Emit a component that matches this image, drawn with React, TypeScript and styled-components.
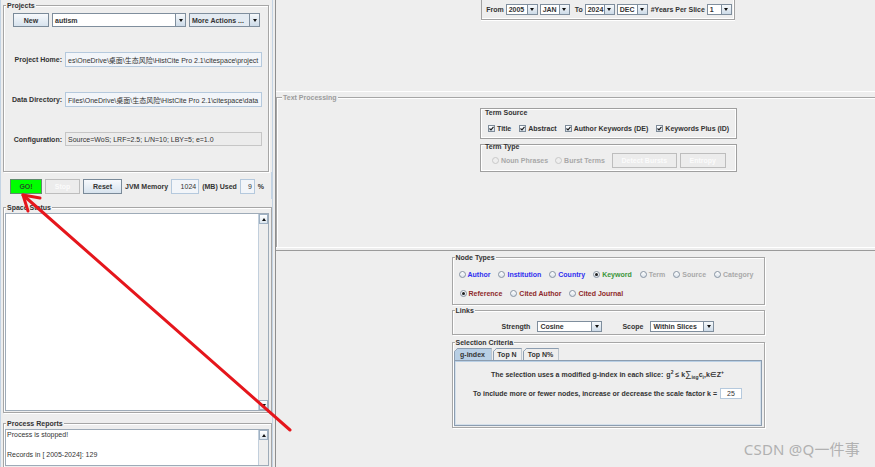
import React from "react";
import styled, { createGlobalStyle, css } from "styled-components";

const GlobalStyle = createGlobalStyle`
  html, body { margin: 0; padding: 0; background: #eeeeee; }
  body {
    font-family: "Liberation Sans", "Noto Sans CJK SC", Arial, sans-serif;
    font-size: 7px;
    font-weight: bold;
    color: #333333;
  }
  *, *::before, *::after { box-sizing: border-box; }
`;

const Root = styled.div`
  position: relative;
  display: flex;
  width: 875px;
  height: 467px;
  overflow: hidden;
  background: #eeeeee;
`;

/* ---------- shared pieces ---------- */

const Group = styled.div`
  display: flex;
  flex-direction: column;
  border: 1px solid #a6a6a6;
  box-shadow: inset 1px 1px 0 #ffffff, 1px 1px 0 #ffffff;
`;

const GroupTitle = styled.div<{ $muted?: boolean; $ml?: number }>`
  align-self: flex-start;
  height: 9px;
  margin: -5px 0 0 ${(p) => p.$ml ?? 2}px;
  padding: 0 1px;
  line-height: 9px;
  background: #eeeeee;
  color: ${(p) => (p.$muted ? "#9c9c9c" : "#333333")};
  white-space: nowrap;
`;

const Button = styled.div<{ $w: number; $h?: number; $variant?: "go" | "off" }>`
  flex-shrink: 0;
  width: ${(p) => p.$w}px;
  height: ${(p) => p.$h ?? 15}px;
  display: flex;
  align-items: center;
  justify-content: center;
  border: 1px solid #7a8a99;
  background: linear-gradient(#f7f9fc, #d7e3ee);
  color: #333333;
  white-space: nowrap;
  ${(p) =>
    p.$variant === "go" &&
    css`
      background: #00ff00;
      border-color: #5d8a6a;
      color: #225522;
    `}
  ${(p) =>
    p.$variant === "off" &&
    css`
      background: #ececec;
      border-color: #bdbdbd;
      color: #fbfbfb;
    `}
`;

const Combo = styled.div<{ $w: number; $h?: number }>`
  flex-shrink: 0;
  display: flex;
  width: ${(p) => p.$w}px;
  height: ${(p) => p.$h ?? 11}px;
  border: 1px solid #7f8e9d;
  background: #ffffff;
`;

const ComboValue = styled.div<{ $tint?: boolean }>`
  flex: 1;
  min-width: 0;
  display: flex;
  align-items: center;
  padding-left: 2px;
  overflow: hidden;
  white-space: nowrap;
  background: ${(p) => (p.$tint ? "#e4ebf2" : "#ffffff")};
`;

const ComboArrow = styled.div`
  width: 10px;
  flex-shrink: 0;
  display: flex;
  align-items: center;
  justify-content: center;
  border-left: 1px solid #7f8e9d;
  background: linear-gradient(#f6f9fb, #cddbe8);
  &::after {
    content: "";
    border-left: 2.5px solid transparent;
    border-right: 2.5px solid transparent;
    border-top: 3px solid #111111;
  }
`;

const Field = styled.div<{ $w?: number; $align?: "left" | "right" | "center"; $tone?: "blue" | "grey" | "white"; $h?: number }>`
  ${(p) => (p.$w ? `width: ${p.$w}px; flex-shrink: 0;` : "")}
  height: ${(p) => p.$h ?? 15}px;
  display: flex;
  align-items: center;
  justify-content: ${(p) => (p.$align === "right" ? "flex-end" : p.$align === "center" ? "center" : "flex-start")};
  padding: 0 2px;
  overflow: hidden;
  white-space: nowrap;
  font-weight: normal;
  border: 1px solid ${(p) => (p.$tone === "grey" ? "#c6c6c6" : "#b5c9dd")};
  background: ${(p) => (p.$tone === "grey" ? "#ececec" : p.$tone === "white" ? "#ffffff" : "#f2f5f9")};
`;

const Text = styled.span<{ $ml?: number }>`
  flex-shrink: 0;
  white-space: nowrap;
  ${(p) => (p.$ml ? `margin-left: ${p.$ml}px;` : "")}
`;

/* ---------- left column ---------- */

const LeftColumn = styled.div`
  width: 272px;
  flex-shrink: 0;
  display: flex;
  flex-direction: column;
  border-left: 1px solid #c3d3e3;
`;

const ProjectsGroup = styled(Group)`
  width: 266px;
  height: 167px;
  margin: 5px 0 0 2px;
`;

const ProjectsBody = styled.div`
  display: flex;
  flex-direction: column;
  gap: 25px;
  padding: 3px 6px 0 8px;
`;

const ToolRow = styled.div`
  display: flex;
  gap: 3px;
  padding-left: 1px;
`;

const FormRow = styled.div`
  display: grid;
  grid-template-columns: 50px 1fr;
  column-gap: 3px;
  align-items: center;
`;

const FormLabel = styled.span`
  text-align: right;
  white-space: nowrap;
`;

const ControlRow = styled.div`
  height: 27px;
  display: flex;
  align-items: center;
  gap: 3px;
  padding: 2px 0 0 9px;
  border-right: 1px solid #c3d3e3;
`;

const LogGroup = styled(Group)<{ $h?: number; $mt: number }>`
  width: 269px;
  margin: ${(p) => p.$mt}px 0 0 2px;
  ${(p) => (p.$h ? `height: ${p.$h}px;` : "flex: 1; border-bottom: none;")}
`;

const LogArea = styled.div`
  flex: 1;
  display: flex;
  margin: 1px 2px 1px 1px;
  border: 1px solid #9eabb8;
  background: #ffffff;
  min-height: 0;
`;

const LogText = styled.div`
  flex: 1;
  padding: 0 1px;
  font-weight: normal;
  line-height: 10px;
  white-space: pre;
`;

const ScrollTrack = styled.div`
  width: 10px;
  flex-shrink: 0;
  display: flex;
  flex-direction: column;
  justify-content: space-between;
  border-left: 1px solid #c2cfdc;
  background: #eeeeee;
`;

const ScrollButton = styled.div<{ $down?: boolean }>`
  height: 10px;
  display: flex;
  align-items: center;
  justify-content: center;
  border: 1px solid #9fb1c3;
  background: linear-gradient(#ffffff, #dce6ef);
  &::after {
    content: "";
    border-left: 2.5px solid transparent;
    border-right: 2.5px solid transparent;
    ${(p) => (p.$down ? "border-top: 3px solid #111;" : "border-bottom: 3px solid #111;")}
  }
`;

const SplitBar = styled.div`
  width: 4px;
  flex-shrink: 0;
  border-left: 1px solid #c3d3e3;
  border-right: 1px solid #8e8e8e;
`;

/* ---------- right column ---------- */

const RightColumn = styled.div`
  width: 664px;
  flex-shrink: 0;
  display: flex;
  flex-direction: column;
`;

const TopPanel = styled.div`
  height: 92px;
  display: flex;
  justify-content: center;
  border-bottom: 1px solid #ffffff;
`;

const DateBox = styled.div`
  height: 20px;
  display: flex;
  align-items: center;
  gap: 2px;
  padding: 0 2px 0 4px;
  border: 1px solid #a2a2a2;
  border-top: none;
  box-shadow: 0 1px 0 #ffffff, inset -1px -1px 0 #ffffff;
`;

const TextGroup = styled(Group)`
  height: 150px;
  margin-top: 5px;
  align-items: center;
  border-right: none;
  border-bottom: none;
  box-shadow: inset 1px 1px 0 #ffffff;
`;

const Bevel = styled.div<{ $mt: number }>`
  width: 257px;
  display: flex;
  flex-direction: column;
  margin-top: ${(p) => p.$mt}px;
  padding: 0 0 3px 4px;
  border: 1px solid #9f9f9f;
  box-shadow: inset 1px 1px 0 #ffffff, inset -1px -1px 0 #ffffff;
`;

const BevelTitle = styled.div<{ $mt?: number }>`
  height: 7px;
  line-height: 7px;
  margin-top: ${(p) => p.$mt ?? 0}px;
  white-space: nowrap;
`;

const OptionRow = styled.div<{ $mt: number; $h?: number; $gap?: number; $pl?: number; $center?: boolean }>`
  display: flex;
  align-items: center;
  height: ${(p) => p.$h ?? 12}px;
  margin-top: ${(p) => p.$mt}px;
  gap: ${(p) => p.$gap ?? 8}px;
  padding-left: ${(p) => p.$pl ?? 0}px;
  ${(p) => (p.$center ? "justify-content: center;" : "")}
`;

const CheckItem = styled.span`
  display: flex;
  align-items: center;
  gap: 2px;
  white-space: nowrap;
`;

const CheckBox = styled.span`
  width: 7px;
  height: 7px;
  display: flex;
  align-items: center;
  justify-content: center;
  border: 1px solid #7d8b99;
  background: linear-gradient(#ffffff, #d6e0ea);
`;

const RadioItem = styled.span<{ $color?: string }>`
  display: flex;
  align-items: center;
  gap: 2px;
  white-space: nowrap;
  color: ${(p) => p.$color ?? "#333333"};
`;

const RadioDot = styled.span<{ $on?: boolean; $off?: boolean }>`
  position: relative;
  width: 7px;
  height: 7px;
  flex-shrink: 0;
  border-radius: 50%;
  border: 1px solid ${(p) => (p.$off ? "#c8c8c8" : "#8794a2")};
  background: ${(p) => (p.$off ? "#eeeeee" : "linear-gradient(#ffffff, #dbe3eb)")};
  ${(p) =>
    p.$on &&
    css`
      &::after {
        content: "";
        position: absolute;
        left: 1px;
        top: 1px;
        width: 3px;
        height: 3px;
        border-radius: 50%;
        background: #1e1e1e;
      }
    `}
`;

const SplitH = styled.div`
  height: 4px;
  border-top: 1px solid #ffffff;
  border-bottom: 1px solid #9a9a9a;
`;

const BottomPanel = styled.div`
  flex: 1;
  display: flex;
  flex-direction: column;
  align-items: center;
`;

const CriteriaGroup = styled(Group)<{ $mt: number }>`
  width: 313px;
  margin-top: ${(p) => p.$mt}px;
`;

const GroupBody = styled.div<{ $pad: string; $gap?: number }>`
  display: flex;
  flex-direction: column;
  padding: ${(p) => p.$pad};
  gap: ${(p) => p.$gap ?? 0}px;
`;

const TabStrip = styled.div`
  display: flex;
  gap: 1px;
  height: 12px;
  margin-top: 1px;
`;

const Tab = styled.div<{ $w: number; $active?: boolean }>`
  width: ${(p) => p.$w}px;
  display: flex;
  align-items: center;
  justify-content: center;
  border: 1px solid #8c9db0;
  border-bottom: none;
  background-origin: border-box;
  background: linear-gradient(
    135deg,
    transparent 2.4px,
    #8c9db0 2.4px,
    #8c9db0 3.4px,
    ${(p) => (p.$active ? "#b8cfe5" : "#eeeeee")} 3.4px
  ) border-box;
  clip-path: polygon(4px 0, 100% 0, 100% 100%, 0 100%, 0 4px);
  white-space: nowrap;
`;

const TabPanel = styled.div`
  height: 66px;
  display: flex;
  flex-direction: column;
  align-items: center;
  gap: 7px;
  padding-top: 7px;
  border: 1px solid #8c9db0;
  box-shadow: inset 0 1px 0 #b8cfe5, inset 0 0 0 1px #d3dfea;
`;

const TabLine = styled.div`
  height: 12px;
  display: flex;
  align-items: center;
  gap: 3px;
  white-space: nowrap;
`;

const Sup = styled.sup`
  font-size: 5px;
  vertical-align: 3px;
`;

const Sub = styled.sub`
  font-size: 5px;
  vertical-align: -2px;
`;

const Sigma = styled.span`
  font-size: 9px;
  font-weight: normal;
`;

const ArrowLayer = styled.svg`
  position: absolute;
  left: 0;
  top: 0;
  pointer-events: none;
`;

const Watermark = styled.div`
  position: absolute;
  right: 15px;
  bottom: 8px;
  font-family: "Noto Sans", "Noto Sans CJK SC", sans-serif;
  font-size: 15px;
  font-weight: normal;
  color: #b1b1b1;
  letter-spacing: 0.2px;
`;

const Check = () => (
  <svg width="5" height="5" viewBox="0 0 5 5">
    <path d="M0.5 2.5 L2 3.9 L4.5 0.8" stroke="#1e1e1e" strokeWidth="1.1" fill="none" />
  </svg>
);

const DropCombo = ({ w, h, tint, children }: { w: number; h?: number; tint?: boolean; children: React.ReactNode }) => (
  <Combo $w={w} $h={h}>
    <ComboValue $tint={tint}>{children}</ComboValue>
    <ComboArrow />
  </Combo>
);

const nodeRow1: [string, string, boolean][] = [
  ["Author", "#3030f0", false],
  ["Institution", "#3030f0", false],
  ["Country", "#3030f0", false],
  ["Keyword", "#3a963a", true],
  ["Term", "#a9a9a9", false],
  ["Source", "#a9a9a9", false],
  ["Category", "#a9a9a9", false],
];

const nodeRow2: [string, boolean][] = [
  ["Reference", true],
  ["Cited Author", false],
  ["Cited Journal", false],
];

export default function App() {
  return (
    <>
      <GlobalStyle />
      <Root>
        <LeftColumn>
          <ProjectsGroup>
            <GroupTitle>Projects</GroupTitle>
            <ProjectsBody>
              <ToolRow>
                <Button $w={36} $h={14}>New</Button>
                <DropCombo w={134} h={14}>autism</DropCombo>
                <DropCombo w={71} h={14} tint>More Actions ...</DropCombo>
              </ToolRow>
              <FormRow>
                <FormLabel>Project Home:</FormLabel>
                <Field>es\OneDrive\桌面\生态风险\HistCite Pro 2.1\citespace\project</Field>
              </FormRow>
              <FormRow>
                <FormLabel>Data Directory:</FormLabel>
                <Field>Files\OneDrive\桌面\生态风险\HistCite Pro 2.1\citespace\data</Field>
              </FormRow>
              <FormRow>
                <FormLabel>Configuration:</FormLabel>
                <Field $tone="grey" $h={14}>Source=WoS; LRF=2.5; L/N=10; LBY=5; e=1.0</Field>
              </FormRow>
            </ProjectsBody>
          </ProjectsGroup>

          <ControlRow>
            <Button $w={32} $variant="go">GO!</Button>
            <Button $w={35} $variant="off">Stop</Button>
            <Button $w={39}>Reset</Button>
            <Text>JVM Memory</Text>
            <Field $w={28} $align="right">1024</Field>
            <Text>(MB) Used</Text>
            <Field $w={15} $align="right">9</Field>
            <Text>%</Text>
          </ControlRow>

          <LogGroup $h={206} $mt={8}>
            <GroupTitle>Space Status</GroupTitle>
            <LogArea>
              <LogText />
              <ScrollTrack>
                <ScrollButton />
                <ScrollButton $down />
              </ScrollTrack>
            </LogArea>
          </LogGroup>

          <LogGroup $mt={10}>
            <GroupTitle>Process Reports</GroupTitle>
            <LogArea>
              <LogText>{"Process is stopped!\n\nRecords in [ 2005-2024]: 129"}</LogText>
              <ScrollTrack>
                <ScrollButton />
              </ScrollTrack>
            </LogArea>
          </LogGroup>
        </LeftColumn>

        <SplitBar />

        <RightColumn>
          <TopPanel>
            <DateBox>
              <Text>From</Text>
              <DropCombo w={32}>2005</DropCombo>
              <DropCombo w={30}>JAN</DropCombo>
              <Text $ml={3}>To</Text>
              <DropCombo w={30}>2024</DropCombo>
              <DropCombo w={31}>DEC</DropCombo>
              <Text $ml={1}>#Years Per Slice</Text>
              <DropCombo w={25}>1</DropCombo>
            </DateBox>
          </TopPanel>

          <TextGroup>
            <GroupTitle $muted $ml={5}>Text Processing</GroupTitle>
            <Bevel $mt={6}>
              <BevelTitle>Term Source</BevelTitle>
              <OptionRow $mt={5} $h={14} $pl={3}>
                {["Title", "Abstract", "Author Keywords (DE)", "Keywords Plus (ID)"].map((t) => (
                  <CheckItem key={t}>
                    <CheckBox>
                      <Check />
                    </CheckBox>
                    {t}
                  </CheckItem>
                ))}
              </OptionRow>
            </Bevel>
            <Bevel $mt={5}>
              <BevelTitle $mt={-2}>Term Type</BevelTitle>
              <OptionRow $mt={3} $h={15} $pl={7} $gap={7}>
                <RadioItem $color="#a8a8a8">
                  <RadioDot $off />
                  Noun Phrases
                </RadioItem>
                <RadioItem $color="#a8a8a8">
                  <RadioDot $off />
                  Burst Terms
                </RadioItem>
                <Button $w={65} $variant="off">Detect Bursts</Button>
                <Button $w={46} $variant="off" style={{ marginLeft: -4 }}>Entropy</Button>
              </OptionRow>
            </Bevel>
          </TextGroup>

          <SplitH />

          <BottomPanel>
            <CriteriaGroup $mt={6}>
              <GroupTitle>Node Types</GroupTitle>
              <GroupBody $pad="6px 0 5px 6px" $gap={7}>
                <OptionRow $mt={0}>
                  {nodeRow1.map(([label, color, on]) => (
                    <RadioItem key={label} $color={color}>
                      <RadioDot $on={on} />
                      {label}
                    </RadioItem>
                  ))}
                </OptionRow>
                <OptionRow $mt={0} $pl={1}>
                  {nodeRow2.map(([label, on]) => (
                    <RadioItem key={label} $color="#8e2a2a">
                      <RadioDot $on={on} />
                      {label}
                    </RadioItem>
                  ))}
                </OptionRow>
              </GroupBody>
            </CriteriaGroup>

            <CriteriaGroup $mt={5}>
              <GroupTitle>Links</GroupTitle>
              <GroupBody $pad="5px 0 2px 0">
                <OptionRow $mt={0} $center $gap={7}>
                  <Text>Strength</Text>
                  <DropCombo w={65}>Cosine</DropCombo>
                  <Text $ml={13}>Scope</Text>
                  <DropCombo w={64}>Within Slices</DropCombo>
                </OptionRow>
              </GroupBody>
            </CriteriaGroup>

            <CriteriaGroup $mt={7}>
              <GroupTitle>Selection Criteria</GroupTitle>
              <GroupBody $pad="0 2px 1px 1px">
                <TabStrip>
                  <Tab $w={38} $active>g-index</Tab>
                  <Tab $w={29}>Top N</Tab>
                  <Tab $w={36}>Top N%</Tab>
                </TabStrip>
                <TabPanel>
                  <TabLine>
                    The selection uses a modified g-index in each slice:
                    <span>
                      g<Sup>2</Sup> ≤ k<Sigma>∑</Sigma>
                      <Sub>i≤g</Sub>c<Sub>i</Sub>,k∈Z<Sup>+</Sup>
                    </span>
                  </TabLine>
                  <TabLine>
                    To include more or fewer nodes, increase or decrease the scale factor k =
                    <Field $w={22} $h={11} $tone="white" $align="center">25</Field>
                  </TabLine>
                </TabPanel>
              </GroupBody>
            </CriteriaGroup>
          </BottomPanel>
        </RightColumn>

        <ArrowLayer width="875" height="467" viewBox="0 0 875 467">
          <g stroke="#e5161c" strokeWidth="3" strokeLinecap="round" fill="none">
            <line x1="290" y1="430" x2="23" y2="195" />
            <polyline points="40,198 23,195 28,211" strokeLinejoin="round" />
          </g>
        </ArrowLayer>
        <Watermark>CSDN @Q一件事</Watermark>
      </Root>
    </>
  );
}
